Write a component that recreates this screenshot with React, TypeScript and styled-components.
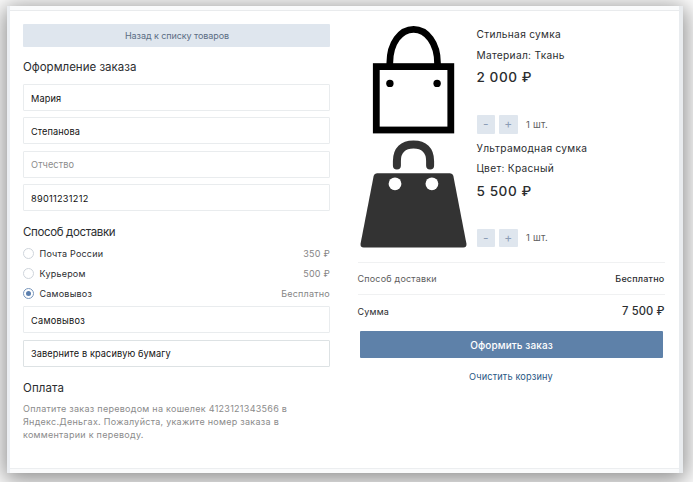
import React from 'react';
import styled, { createGlobalStyle } from 'styled-components';

const GlobalStyle = createGlobalStyle`
  * { box-sizing: border-box; }
  body {
    margin: 0;
    background: #fff;
    font-family: Inter, "Noto Sans", sans-serif;
    color: #2b2d2f;
  }
  button, input { font-family: inherit; }
`;

const Stage = styled.div`
  width: 693px;
  height: 482px;
  padding: 6px 10px 9px 7px;
  overflow: hidden;
`;

const Frame = styled.div`
  height: 467px;
  padding: 4px 4px 4px 3px;
  background: linear-gradient(90deg, #ebeef2 3px, #fafbfc 3px, #fafbfc 672px, #e9ecef 672px);
  box-shadow: 0 4px 22px 3px rgba(0, 0, 0, 0.46);
`;

const Page = styled.main`
  display: grid;
  grid-template-columns: 307px 307px;
  column-gap: 27.5px;
  height: 459px;
  padding: 13px 0 0 13px;
  background: #fff;
  border-top: 1px solid #e9ebed;
  border-bottom: 1px solid #eceef0;
`;

const Column = styled.section`
  display: flex;
  flex-direction: column;
`;

const BackButton = styled.button`
  height: 23px;
  padding: 0 0 0 1px;
  border: 0;
  border-radius: 1px;
  background: #dfe6ee;
  color: #5b6d84;
  font-size: 9px;
  letter-spacing: -0.08px;
`;

const Heading = styled.h2<{ $top: number; $spacing?: number }>`
  margin: ${(p) => p.$top}px 0 0;
  font-size: 11.5px;
  line-height: 16px;
  font-weight: 400;
  letter-spacing: ${(p) => p.$spacing ?? 0}px;
`;

const Fields = styled.div<{ $top: number }>`
  display: flex;
  flex-direction: column;
  gap: 6.4px;
  margin-top: ${(p) => p.$top}px;
`;

const Field = styled.input<{ $strong?: boolean; $spacing?: number }>`
  width: 100%;
  height: 27px;
  padding: 1px 7px 0;
  border: 1px solid ${(p) => (p.$strong ? '#dde2e4' : '#e9ecee')};
  border-radius: 1px;
  background: #fff;
  color: #111;
  font-size: 9.2px;
  letter-spacing: ${(p) => p.$spacing ?? 0.1}px;
  outline: 0;
  &::placeholder { color: #8c8c8c; opacity: 1; }
`;

const Options = styled.div`
  display: flex;
  flex-direction: column;
  margin-top: 3px;
`;

const Option = styled.label`
  display: flex;
  align-items: center;
  height: 20px;
  font-size: 9px;
  letter-spacing: 0.22px;
`;

const Radio = styled.span<{ $on?: boolean }>`
  display: grid;
  place-items: center;
  width: 11px;
  height: 11px;
  margin-right: 5.5px;
  border: 1px solid ${(p) => (p.$on ? '#7795bb' : '#cfd5dc')};
  border-radius: 50%;
  &::after {
    content: '';
    width: 5px;
    height: 5px;
    border-radius: 50%;
    background: ${(p) => (p.$on ? '#5b7fae' : 'transparent')};
  }
`;

const OptionPrice = styled.span`
  margin-left: auto;
  color: #858585;
`;

const Note = styled.p`
  margin: 6px 0 0;
  color: #8b8b8b;
  font-size: 9px;
  line-height: 13.4px;
  letter-spacing: 0.27px;
  white-space: nowrap;
`;

const Products = styled.div`
  display: flex;
  flex-direction: column;
  margin-bottom: 11px;
`;

const Product = styled.article`
  display: grid;
  grid-template-columns: 119px 1fr;
  height: 113.5px;
`;

const Picture = styled.svg`
  display: block;
  width: 119px;
  height: 113px;
`;

const Details = styled.div`
  display: flex;
  flex-direction: column;
`;

const Line = styled.div`
  height: 20.5px;
  font-size: 10.2px;
  line-height: 20px;
  letter-spacing: 0.28px;
`;

const Price = styled.div`
  height: 24px;
  font-size: 13.6px;
  line-height: 24px;
  font-weight: 500;
  letter-spacing: 0.55px;
`;

const Quantity = styled.div`
  display: flex;
  align-items: center;
  gap: 4px;
  margin-top: 26px;
  color: #606060;
  font-size: 9.4px;
`;

const Step = styled.button`
  width: 18.5px;
  height: 18.5px;
  padding: 0;
  border: 0;
  border-radius: 1px;
  background: #dfe6ee;
  color: #8b9db6;
  font-size: 12px;
  line-height: 18px;
`;

const Count = styled.span`
  margin-left: 4.5px;
  letter-spacing: 0.25px;
`;

const SummaryRow = styled.div<{ $height: number }>`
  display: flex;
  align-items: center;
  justify-content: space-between;
  height: ${(p) => p.$height}px;
  border-top: 1px solid #f0f1f2;
  font-size: 9px;
  letter-spacing: 0.2px;
`;

const Muted = styled.span`
  color: #5c5c5c;
`;

const Medium = styled.span`
  font-weight: 500;
`;

const Total = styled.span`
  font-size: 11.2px;
  font-weight: 500;
  letter-spacing: 0.1px;
`;

const Submit = styled.button`
  height: 27px;
  margin: 4px 1.5px 0 2.5px;
  padding: 0;
  border: 0;
  border-radius: 1px;
  background: #5e81a9;
  color: #fff;
  font-size: 10px;
  font-weight: 500;
  letter-spacing: 0.1px;
`;

const Clear = styled.a`
  margin-top: 11px;
  color: #2a5885;
  font-size: 9.2px;
  line-height: 15px;
  text-align: center;
  letter-spacing: 0.15px;
`;

const ToteBag = () => (
  <Picture viewBox="357.5 24 119 113">
    <path d="M389.3 64V63C389.3 43 400 29.3 413.1 29.3S437 43 437 63v1" fill="none" stroke="#000" strokeWidth="6.7" />
    <rect x="375.8" y="66.6" width="74.5" height="63.4" fill="#fff" stroke="#000" strokeWidth="6.8" />
    <circle cx="389.4" cy="83.4" r="3.7" />
    <circle cx="436.6" cy="83.4" r="3.7" />
  </Picture>
);

const HandBag = () => (
  <Picture viewBox="357.5 137.5 119 113">
    <path d="M396.4 165v-4.5C396.4 149.5 402.5 144 413 144s16.6 5.5 16.6 16.5v4.5" fill="none" stroke="#333" strokeWidth="8" strokeLinecap="round" />
    <path d="M376.5 172.7h73q2.7 0 3.3 2.6l13.1 67.7q.7 4-3.2 4h-99.4q-3.9 0-3.2-4l13.1-67.7q.6-2.6 3.3-2.6z" fill="#333" />
    <circle cx="394.5" cy="183.3" r="6.4" fill="#fff" />
    <circle cx="431.4" cy="183.3" r="6.4" fill="#fff" />
  </Picture>
);

const products = [
  { name: 'Стильная сумка', detail: 'Материал: Ткань', price: '2 000 ₽', Art: ToteBag },
  { name: 'Ультрамодная сумка', detail: 'Цвет: Красный', price: '5 500 ₽', Art: HandBag },
];

const deliveries = [
  { name: 'Почта России', price: '350 ₽' },
  { name: 'Курьером', price: '500 ₽' },
  { name: 'Самовывоз', price: 'Бесплатно', on: true },
];

export default function App() {
  return (
    <Stage>
      <GlobalStyle />
      <Frame>
        <Page>
          <Column>
            <BackButton>Назад к списку товаров</BackButton>
            <Heading $top={12}>Оформление заказа</Heading>
            <Fields $top={9}>
              <Field defaultValue="Мария" />
              <Field defaultValue="Степанова" />
              <Field placeholder="Отчество" />
              <Field $spacing={0.27} defaultValue="89011231212" />
            </Fields>
            <Heading $top={13} $spacing={-0.36}>Способ доставки</Heading>
            <Options>
              {deliveries.map((d) => (
                <Option key={d.name}>
                  <Radio $on={d.on} />
                  {d.name}
                  <OptionPrice>{d.price}</OptionPrice>
                </Option>
              ))}
            </Options>
            <Fields $top={3}>
              <Field $spacing={0.27} defaultValue="Самовывоз" />
              <Field $strong defaultValue="Заверните в красивую бумагу" />
            </Fields>
            <Heading $top={13} $spacing={0.1}>Оплата</Heading>
            <Note>
              Оплатите заказ переводом на кошелек 4123121343566 в<br />
              Яндекс.Деньгах. Пожалуйста, укажите номер заказа в<br />
              комментарии к переводу.
            </Note>
          </Column>
          <Column>
            <Products>
              {products.map(({ name, detail, price, Art }) => (
                <Product key={name}>
                  <Art />
                  <Details>
                    <Line>{name}</Line>
                    <Line>{detail}</Line>
                    <Price>{price}</Price>
                    <Quantity>
                      <Step>-</Step>
                      <Step>+</Step>
                      <Count>1 шт.</Count>
                    </Quantity>
                  </Details>
                </Product>
              ))}
            </Products>
            <SummaryRow $height={32}>
              <Muted>Способ доставки</Muted>
              <Medium>Бесплатно</Medium>
            </SummaryRow>
            <SummaryRow $height={33}>
              <span>Сумма</span>
              <Total>7 500 ₽</Total>
            </SummaryRow>
            <Submit>Оформить заказ</Submit>
            <Clear>Очистить корзину</Clear>
          </Column>
        </Page>
      </Frame>
    </Stage>
  );
}
